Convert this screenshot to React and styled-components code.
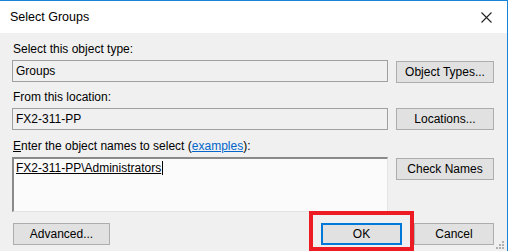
import React from 'react'
import styled, { createGlobalStyle } from 'styled-components'

const Global = createGlobalStyle`
  html, body { margin: 0; padding: 0; background: #ffffff; }
  body { font-family: "Liberation Sans", Arial, sans-serif; }
`

const Window = styled.div`
  width: 508px;
  height: 251px;
  box-sizing: border-box;
  border-top: 1px solid #1883d7;
  border-right: 1px solid #1883d7;
  background: #f0f0f0;
  overflow: hidden;
  position: relative;
`

const TitleBar = styled.div`
  height: 32px;
  background: #ffffff;
  display: flex;
  align-items: center;
  justify-content: space-between;
  padding: 0 15px 0 10px;
  font-size: 12.5px;
  color: #000;
`

const Body = styled.div`
  padding: 9px 0 0 12px;
  display: grid;
  grid-template-columns: 376px 98px;
  column-gap: 8px;
  align-items: start;
`

const Label = styled.div`
  grid-column: 1 / span 2;
  font-size: 12px;
  line-height: 14px;
  color: #000;
  margin: ${p => p.$top || 0}px 0 4px 1px;
  u { text-decoration: underline; }
  a { color: #0066cc; text-decoration: underline; }
`

const ReadOnly = styled.div`
  height: 22px;
  box-sizing: border-box;
  border: 1px solid #a0a0a0;
  background: #f0f0f0;
  font-size: 12px;
  line-height: 20px;
  padding-left: 3px;
  color: #000;
`

const Button = styled.div`
  height: 22px;
  box-sizing: border-box;
  border: 1px solid #adadad;
  background: #e1e1e1;
  font-size: 12px;
  line-height: 20px;
  text-align: center;
  color: #000;
  margin-top: ${p => p.$top || 0}px;
  ${p => p.$default && `
    border-color: #0078d7;
    box-shadow: inset 0 0 0 1px #0078d7;
  `}
`

const NamesBox = styled.div`
  height: 55px;
  box-sizing: border-box;
  border-top: 2px solid #8a8a8a;
  border-left: 2px solid #8a8a8a;
  border-right: 1px solid #e3e3e3;
  border-bottom: 1px solid #e3e3e3;
  background: #fbfbfb;
  font-size: 12px;
  line-height: 14px;
  padding: 2px 0 0 2px;
`

const Resolved = styled.span`
  text-decoration: underline;
  border-right: 1px solid #000;
  padding-right: 1px;
`

const Footer = styled.div`
  display: flex;
  align-items: flex-start;
  padding-left: 13px;
`

const Spacer = styled.div`
  flex: 1;
`

const Highlight = styled.div`
  border: 4px solid #ed1c24;
  padding: 8px 8px 2px 8px;
  margin-top: -1px;
`

const Grip = styled.svg`
  position: absolute;
  right: 3px;
  bottom: 2px;
`

export default function App() {
  return (
    <>
      <Global />
      <Window>
        <TitleBar>
          <span>Select Groups</span>
          <svg width="11" height="11" viewBox="0 0 11 11">
            <path d="M0.5 0.5 L10.5 10.5 M10.5 0.5 L0.5 10.5" stroke="#222" strokeWidth="1.1" />
          </svg>
        </TitleBar>
        <Body>
          <Label>Select this object type:</Label>
          <ReadOnly>Groups</ReadOnly>
          <Button $top={1}>Object Types...</Button>
          <Label $top={7}>From this location:</Label>
          <ReadOnly>FX2-311-PP</ReadOnly>
          <Button>Locations...</Button>
          <Label $top={9}><u>E</u>nter the object names to select (<a>examples</a>):</Label>
          <NamesBox>
            <Resolved>FX2-311-PP\Administrators</Resolved>
          </NamesBox>
          <Button $top={1}>Check Names</Button>
        </Body>
        <Footer>
          <Button $top={11} style={{ width: 97 }}>Advanced...</Button>
          <Spacer />
          <Highlight>
            <Button $default style={{ width: 81 }}>OK</Button>
          </Highlight>
          <Button $top={11} style={{ width: 80, marginRight: 13 }}>Cancel</Button>
        </Footer>
        <Grip width="8" height="8" viewBox="0 0 8 8">
          <rect x="6" y="0" width="2" height="2" fill="#b0b0b0" />
          <rect x="3" y="3" width="2" height="2" fill="#b0b0b0" />
          <rect x="6" y="3" width="2" height="2" fill="#b0b0b0" />
          <rect x="0" y="6" width="2" height="2" fill="#b0b0b0" />
          <rect x="3" y="6" width="2" height="2" fill="#b0b0b0" />
          <rect x="6" y="6" width="2" height="2" fill="#b0b0b0" />
        </Grip>
      </Window>
    </>
  )
}
